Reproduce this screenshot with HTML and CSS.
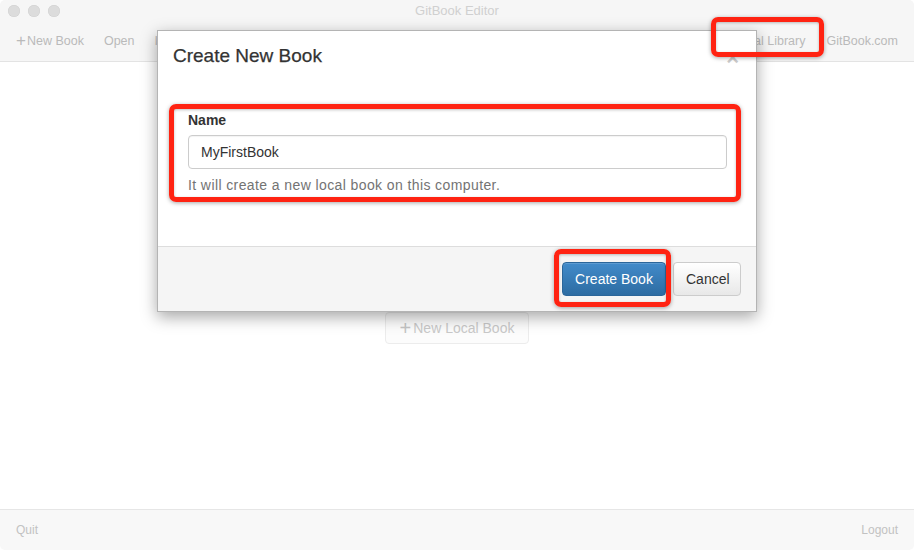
FILE: index.html
```html
<!DOCTYPE html>
<html lang="en">
<head>
<meta charset="utf-8">
<title>GitBook Editor</title>
<link rel="stylesheet" href="styles.css">
</head>
<body>
<div class="window">
  <div class="titlebar">
    <div class="lights">
      <span class="light"></span><span class="light"></span><span class="light"></span>
    </div>
    <div class="title">GitBook Editor</div>
  </div>
  <div class="toolbar">
    <div class="tb-left">
      <span class="tb-item"><span class="plus">+</span>New Book</span>
      <span class="tb-item">Open</span>
      <span class="tb-item">Import</span>
    </div>
    <div class="tb-right">
      <span class="tb-item">Local Library</span>
      <span class="tb-item">GitBook.com</span>
    </div>
  </div>
  <div class="main">
    <p class="empty">You don't have any books yet</p>
    <button class="ghost-btn"><span class="plus big">+</span>New Local Book</button>
  </div>
  <div class="footer">
    <span class="foot-item">Quit</span>
    <span class="foot-item">Logout</span>
  </div>
</div>

<div class="modal">
  <div class="modal-header">
    <h4 class="modal-title">Create New Book</h4>
    <span class="close">&times;</span>
  </div>
  <div class="modal-body">
    <label class="label">Name</label>
    <div class="input">MyFirstBook</div>
    <p class="help">It will create a new local book on this computer.</p>
  </div>
  <div class="modal-footer">
    <button class="btn btn-primary">Create Book</button>
    <button class="btn btn-default">Cancel</button>
  </div>
</div>

<div class="mark mark-library"></div>
<div class="mark mark-form"></div>
<div class="mark mark-create"></div>
</body>
</html>
```

FILE: styles.css
```css
html, body {
  margin: 0;
  padding: 0;
  background: #ffffff;
}
body {
  font-family: "Liberation Sans", Arial, Helvetica, sans-serif;
  width: 914px;
  height: 550px;
  overflow: hidden;
  position: relative;
}
.window {
  display: flex;
  flex-direction: column;
  height: 550px;
  background: #ffffff;
  border-radius: 5px;
  overflow: hidden;
}
.titlebar {
  height: 22px;
  flex: none;
  background: #f6f6f6;
  display: flex;
  align-items: center;
  position: relative;
}
.lights {
  display: flex;
  gap: 8px;
  padding-left: 8px;
}
.light {
  width: 12px;
  height: 12px;
  border-radius: 50%;
  background: #dcdcdc;
  box-shadow: inset 0 0 0 0.5px #d0d0d0;
}
.title {
  position: absolute;
  left: 0;
  right: 0;
  text-align: center;
  font-size: 13px;
  color: #d0d0d0;
  line-height: 22px;
}
.toolbar {
  height: 39px;
  flex: none;
  background: #f6f6f6;
  border-bottom: 1px solid #e3e3e3;
  display: flex;
  align-items: center;
  justify-content: space-between;
  padding: 0 16px 2px 16px;
  box-sizing: border-box;
  height: 40px;
}
.tb-left, .tb-right {
  display: flex;
  align-items: center;
  gap: 20px;
}
.tb-right { gap: 21px; }
.tb-item {
  font-size: 12.5px;
  color: #bababa;
  display: inline-flex;
  align-items: center;
}
.plus {
  font-size: 17px;
  line-height: 13px;
  margin-right: 1px;
  font-weight: normal;
}
.main {
  flex: 1;
  display: flex;
  flex-direction: column;
  align-items: center;
  padding-top: 212px;
}
.empty {
  margin: 0 0 20px;
  font-size: 16px;
  color: #cccccc;
}
.ghost-btn {
  font-family: inherit;
  font-size: 14px;
  color: #c9c9c9;
  background: #fcfcfc;
  border: 1px solid #ececec;
  border-radius: 4px;
  height: 32px;
  padding: 0 12px;
  width: 144px;
  display: inline-flex;
  align-items: center;
  justify-content: center;
}
.ghost-btn .big {
  font-size: 20px;
  margin-right: 2px;
  color: #c4c4c4;
}
.footer {
  height: 40px;
  flex: none;
  background: #f8f8f8;
  border-top: 1px solid #e6e6e6;
  display: flex;
  align-items: center;
  justify-content: space-between;
  padding: 0 16px;
}
.foot-item {
  font-size: 12px;
  color: #c2c2c2;
}

/* modal */
.modal {
  position: absolute;
  left: 157px;
  top: 30px;
  width: 598px;
  height: 280px;
  background: #ffffff;
  border: 1px solid #b4b4b4;
  box-shadow: 0 5px 15px rgba(0, 0, 0, 0.35);
  display: flex;
  flex-direction: column;
}
.modal-header {
  height: 50px;
  padding: 0 15px;
  display: flex;
  align-items: center;
  justify-content: space-between;
  position: relative;
}
.modal-title {
  margin: 0;
  font-size: 19px;
  font-weight: normal;
  color: #333333;
  line-height: 20px;
  -webkit-text-stroke: 0.25px #333;
}
.close {
  font-size: 22px;
  font-weight: bold;
  color: #000;
  opacity: 0.2;
  line-height: 1;
  margin-right: 2px;
  margin-top: 4px;
}
.modal-body {
  flex: 1;
  padding: 30px 29px 0 30px;
  display: flex;
  flex-direction: column;
}
.label {
  font-size: 14px;
  font-weight: bold;
  color: #333333;
  line-height: 18px;
  margin-bottom: 6px;
}
.input {
  height: 32px;
  border: 1px solid #cccccc;
  border-radius: 4px;
  padding: 0 12px;
  font-size: 14px;
  line-height: 32px;
  color: #333333;
  box-shadow: inset 0 1px 1px rgba(0, 0, 0, 0.05);
}
.help {
  margin: 7px 0 0;
  font-size: 14px;
  line-height: 18px;
  color: #737373;
  letter-spacing: 0.4px;
}
.modal-footer {
  height: 64px;
  flex: none;
  background: #f5f5f5;
  border-top: 1px solid #dddddd;
  display: flex;
  align-items: center;
  justify-content: flex-end;
  gap: 7px;
  padding: 0 15px;
}
.btn {
  font-family: inherit;
  font-size: 14px;
  height: 34px;
  border-radius: 4px;
  padding: 0 12px;
  cursor: pointer;
}
.btn-primary {
  width: 104px;
  color: #ffffff;
  background: linear-gradient(to bottom, #428bca 0%, #2d6ca2 100%);
  border: 1px solid #2b669a;
  box-shadow: inset 0 1px 0 rgba(255, 255, 255, 0.15);
}
.btn-default {
  width: 68px;
  color: #333333;
  background: linear-gradient(to bottom, #ffffff 0%, #e8e8e8 100%);
  border: 1px solid #cccccc;
}

/* annotation marks */
.mark {
  position: absolute;
  border: 5px solid #ff2312;
  border-radius: 7px;
  box-shadow: 0 1px 4px rgba(0, 0, 0, 0.35), inset 0 1px 3px rgba(0, 0, 0, 0.25);
  box-sizing: border-box;
}
.mark-library {
  left: 711px;
  top: 17px;
  width: 113px;
  height: 40px;
}
.mark-form {
  left: 169px;
  top: 104px;
  width: 572px;
  height: 98px;
}
.mark-create {
  left: 554px;
  top: 249px;
  width: 117px;
  height: 58px;
}
```
